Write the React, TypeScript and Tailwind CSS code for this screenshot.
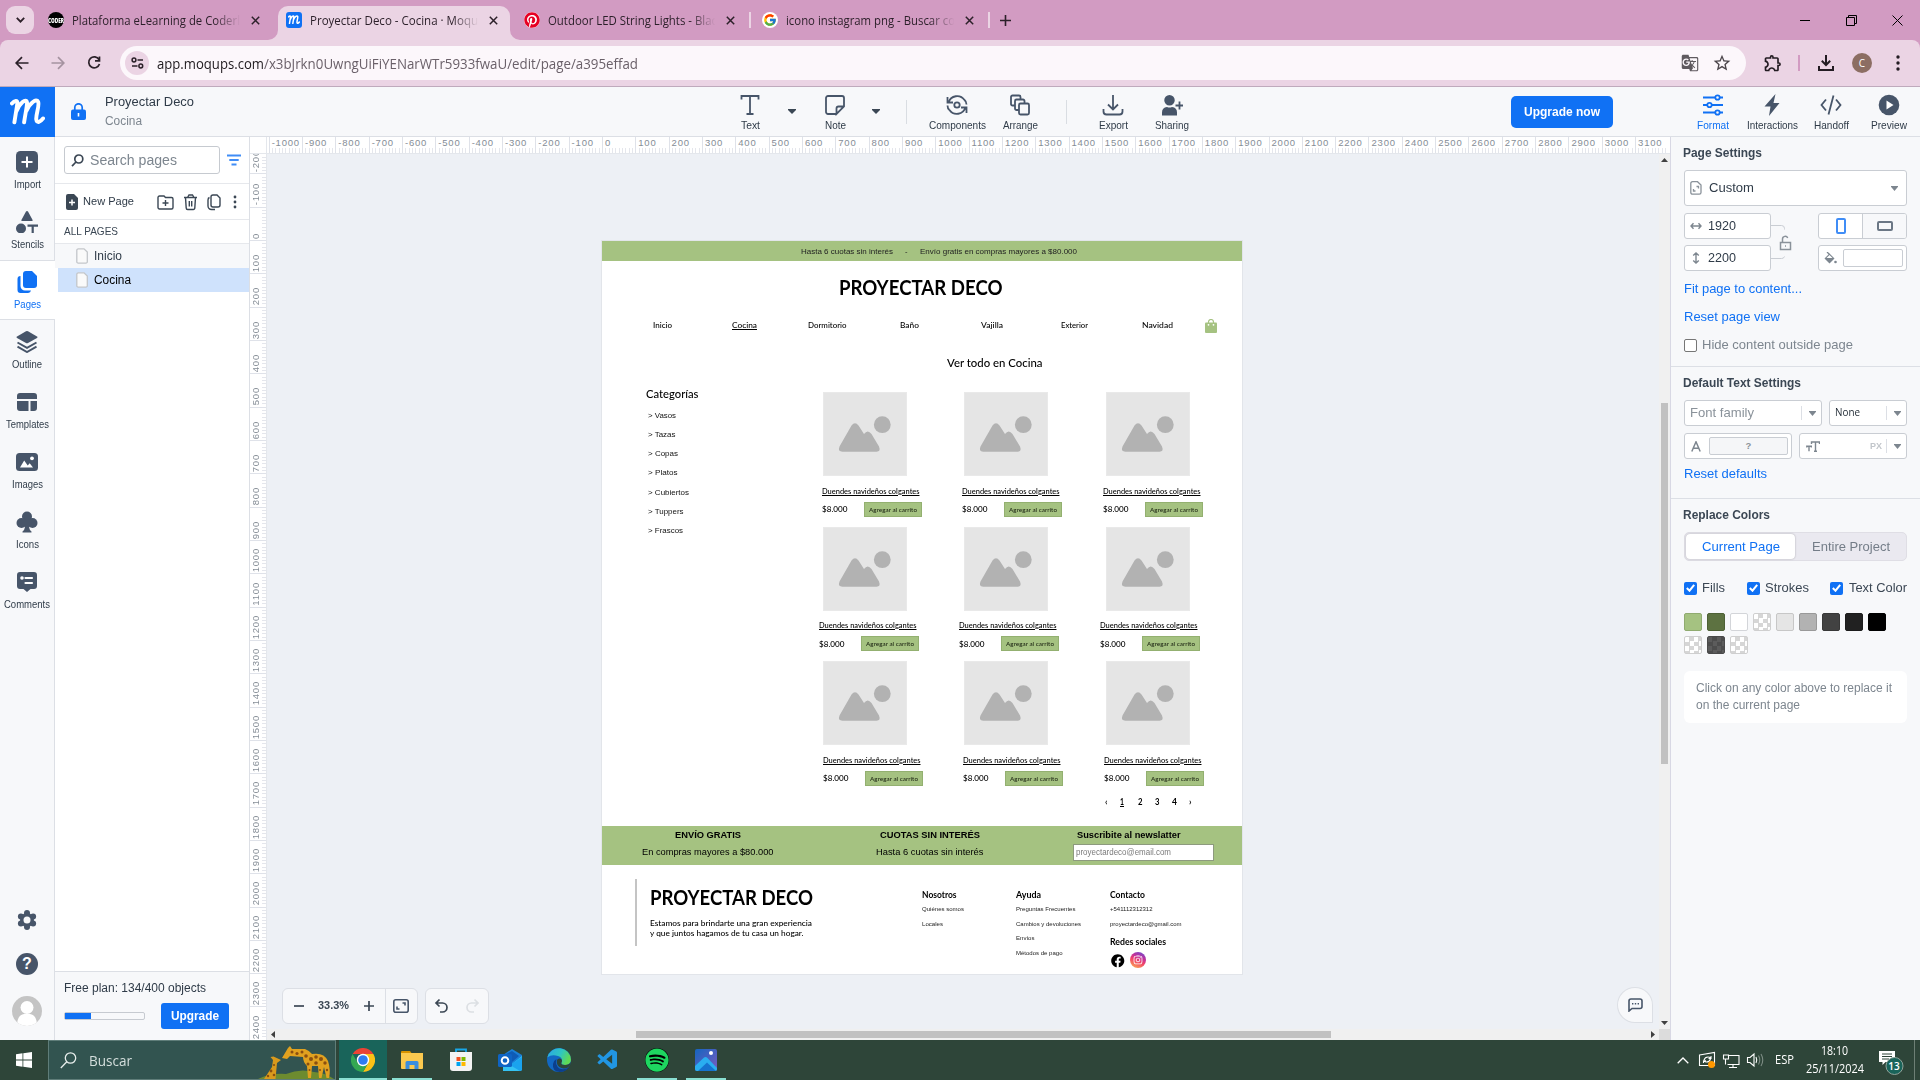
import React, { useLayoutEffect, useRef } from "react";
import { FcGoogle } from "react-icons/fc";
import { FaPinterest, FaSpotify, FaFacebook, FaInstagram } from "react-icons/fa";
import { MdGTranslate, MdStarBorder, MdOutlineExtension } from "react-icons/md";
import { VscVscode } from "react-icons/vsc";

/* Single line of text squeezed or stretched to an exact advance width. */
function Fit({ w, children, className = "" }: { w: number; children: React.ReactNode; className?: string }) {
  const ref = useRef<HTMLSpanElement>(null);
  useLayoutEffect(() => {
    const el = ref.current;
    if (!el) return;
    el.style.transform = "none";
    const natural = el.getBoundingClientRect().width;
    if (natural > 0) el.style.transform = `scaleX(${w / natural})`;
  }, [w, children]);
  return (
    <span className={`block shrink-0 whitespace-nowrap ${className}`} style={{ width: w }}>
      <span ref={ref} className="block w-max origin-left">{children}</span>
    </span>
  );
}

/* ---------- browser chrome ---------- */

const CloseX = () => (
  <svg width="9" height="9" viewBox="0 0 9 9" className="shrink-0" stroke="#2c2029" strokeWidth="1.5"><path d="M.8.8l7.4 7.4M8.2.8L.8 8.2" /></svg>
);

const MScript = ({ size, w = 3.4 }: { size: number; w?: number }) => (
  <svg width={size} height={size * 0.78} viewBox="0 0 36 28" fill="none" stroke="#fff" strokeWidth={w} strokeLinecap="round" strokeLinejoin="round">
    <path d="M2 5.5C4.500 2.500 8 1.800 7.600 5.500L4.500 25M6.500 14C10 5 16.500 0 17.500 4.500C17.800 7 16 15 14.500 25M17 13C20.500 5 27 0 29 4C30.500 8 26.500 17 27 22C27.500 26.500 31.500 24.500 34 21" />
  </svg>
);

function TabTitle({ w, text }: { w: number; text: string }) {
  return (
    <div className="w-[170px] pt-px text-[12.500px] leading-5 text-[#2b1f29] [mask-image:linear-gradient(to_right,#000_84%,transparent_99%)]">
      <Fit w={w}>{text}</Fit>
    </div>
  );
}

function TabStrip() {
  return (
    <div className="flex h-10 items-center bg-[#d29bc2] font-['Open_Sans','Noto_Sans',sans-serif]">
      <div className="ml-1.5 flex h-7 w-7 items-center justify-center rounded-[9px] bg-[#ebd4e4]">
        <svg width="9" height="6" viewBox="0 0 9 6" fill="none" stroke="#2c2029" strokeWidth="1.8"><path d="M.8.8l3.700 3.800L8.200.8" /></svg>
      </div>
      <div className="flex h-10 w-[230px] items-center pl-3.5">
        <div className="flex h-4 w-4 items-center justify-center rounded-full bg-black">
          <Fit w={16} className="text-[7px] font-extrabold leading-none text-white">CODER</Fit>
        </div>
        <div className="w-2" />
        <TabTitle w={168} text="Plataforma eLearning de Coderl" />
        <div className="w-[9px]" />
        <CloseX />
      </div>
      <div className="relative ml-3.5 flex h-[34px] w-[232px] self-end rounded-t-[10px] bg-[#ebd4e4] pl-2">
        <svg className="absolute -left-2.5 bottom-0" width="10" height="10" fill="#ebd4e4"><path d="M10 0v10H0A10 10 0 0 0 10 0" /></svg>
        <svg className="absolute -right-2.5 bottom-0" width="10" height="10" fill="#ebd4e4"><path d="M0 0v10h10A10 10 0 0 1 0 0" /></svg>
        <div className="flex items-center pb-1.5">
          <div className="flex h-4 w-4 items-center justify-center rounded-[3px] bg-[#1071f4]"><MScript size={12} w={4.5} /></div>
          <div className="w-2" />
          <TabTitle w={168} text="Proyectar Deco - Cocina · Moqu" />
          <div className="w-[9px]" />
          <CloseX />
        </div>
      </div>
      <div className="flex h-10 w-[241px] items-center pl-3.5">
        <div className="rounded-full bg-white"><FaPinterest size={16} color="#e60023" /></div>
        <div className="w-2" />
        <TabTitle w={169} text="Outdoor LED String Lights - Blac" />
        <div className="w-[9px]" />
        <CloseX />
        <div className="ml-3.5 h-4 w-0.5 bg-[#ebd4e4]" />
      </div>
      <div className="flex h-10 w-[239px] items-center pl-[11px]">
        <div className="flex h-4 w-4 items-center justify-center rounded-full bg-white"><FcGoogle size={14} /></div>
        <div className="w-2" />
        <TabTitle w={169} text="icono instagram png - Buscar co" />
        <div className="w-[9px]" />
        <CloseX />
        <div className="ml-3.5 h-4 w-0.5 bg-[#ebd4e4]" />
      </div>
      <svg width="11" height="11" viewBox="0 0 11 11" className="ml-[10px]" stroke="#2c2029" strokeWidth="1.6"><path d="M5.500 0v11M0 5.500h11" /></svg>
      <div className="flex-1" />
      <div className="flex w-[138px] items-center">
        <div className="flex w-[46px] justify-center"><div className="h-px w-[10px] bg-black" /></div>
        <div className="flex w-[46px] justify-center">
          <svg width="11" height="11" fill="none" stroke="#000"><path d="M.5 2.500h8v8h-8zM2.500 2.500v-2h8v8h-2" /></svg>
        </div>
        <div className="flex w-[46px] justify-center"><svg width="11" height="11" stroke="#000"><path d="M.5.5l10 10M10.500.5l-10 10" /></svg></div>
      </div>
    </div>
  );
}

function AddressBar() {
  return (
    <div className="bg-[#d29bc2]">
      <div className="flex h-[47px] items-center rounded-t-lg border-b border-[#bfaabc] bg-[#ebd4e4] font-['Open_Sans','Noto_Sans',sans-serif]">
        <svg width="120" height="20" viewBox="0 0 120 20" fill="none" strokeWidth="1.7">
          <path stroke="#2b2129" d="M28.500 10H16.500M22 4.200L16.200 10L22 15.800" />
          <path stroke="#a593a0" d="M51.500 10H63.500M58 4.200L63.800 10L58 15.800" />
          <path stroke="#2b2129" d="M99 6.500A5.500 5.500 0 1 0 99.500 11M99.500 3.500V7.800H95" />
        </svg>
        <div className="flex h-[34px] w-[1626px] items-center rounded-full bg-[#fcf7fb] pl-[5px]">
          <div className="flex h-6 w-6 items-center justify-center rounded-full bg-[#ebd4e4]">
            <svg width="13" height="12" fill="none" stroke="#2b2129" strokeWidth="1.500"><circle cx="3" cy="3" r="1.900" /><path d="M6.500 3H12M1 9h5.500" /><circle cx="9.800" cy="9" r="1.900" /></svg>
          </div>
          <div className="ml-2 flex pt-px text-[14px] leading-5">
            <Fit w={107} className="text-[#1f1a1e]">app.moqups.com</Fit>
            <Fit w={374} className="text-[#6a6069]">/x3bJrkn0UwngUiFiYENarWTr5933fwaU/edit/page/a395effad</Fit>
          </div>
          <div className="flex-1" />
          <MdGTranslate size={18} color="#5f5a5f" />
          <MdStarBorder size={20} color="#4c464b" className="ml-[13px] mr-[14px]" />
        </div>
        <div className="w-[17px]" />
        <MdOutlineExtension size={20} color="#231c22" />
        <div className="ml-[15px] h-4 w-0.5 bg-[#d29bc2]" />
        <svg width="18" height="18" viewBox="0 0 18 18" className="ml-[17px]" fill="none" stroke="#231c22" strokeWidth="2"><path d="M9 1v9.500M4.800 6.800L9 11l4.200-4.200M2 12v4h14v-4" /></svg>
        <div className="ml-[17px] flex h-5 w-5 items-center justify-center rounded-full bg-[#8c6e63] text-[10px] text-white">C</div>
        <svg width="4" height="16" className="ml-6" fill="#231c22"><circle cx="2" cy="2" r="1.700" /><circle cx="2" cy="8" r="1.700" /><circle cx="2" cy="14" r="1.700" /></svg>
      </div>
    </div>
  );
}

/* ---------- application header ---------- */

function Tool({ cell, w, label, active, children }: { cell: string; w: number; label: string; active?: boolean; children: React.ReactNode }) {
  return (
    <div className={`flex h-[49px] shrink-0 flex-col items-center pt-[7px] ${cell} ${active ? "text-[#1071f4]" : "text-[#475569]"}`}>
      <svg width="22" height="22" viewBox="0 0 22 22" fill="none" stroke="currentColor" strokeWidth="1.800">{children}</svg>
      <Fit w={w} className={`mt-[2px] text-[10.500px] leading-[14px] ${active ? "text-[#1071f4]" : "text-[#2f3b48]"}`}>{label}</Fit>
    </div>
  );
}

const Caret = ({ cell }: { cell: string }) => (
  <div className={`flex shrink-0 justify-center ${cell}`}><svg width="8" height="5" fill="#3b4754"><path d="M0 0h8v1L4 5L0 1z" /></svg></div>
);

function AppHeader() {
  return (
    <div className="flex h-[50px] items-center border-b border-[#dcdfe5] bg-[#f7f8fa]">
      <div className="-mb-px flex h-[50px] w-[55px] shrink-0 items-center justify-center bg-[#1071f4]"><MScript size={35} w={4} /></div>
      <svg width="15" height="17" viewBox="0 0 15 17" className="ml-4 shrink-0" fill="#1071f4"><rect y="6.500" width="15" height="10.500" rx="2" /><path d="M3.800 7V4.500a3.700 3.700 0 0 1 7.400 0V7" fill="none" stroke="#1071f4" strokeWidth="1.700" /><rect x="6.700" y="10" width="1.600" height="3.500" fill="#fff" /></svg>
      <div className="ml-[19px] flex w-[620px] flex-col pt-px">
        <Fit w={89} className="text-[12.500px] leading-[19px] text-[#2f3b48]">Proyectar Deco</Fit>
        <Fit w={37} className="text-[12px] leading-[19px] text-[#7d868f]">Cocina</Fit>
      </div>
      <Tool cell="w-[50px]" w={19} label="Text"><path d="M2.500 5.500V2H19.500V5.500M11 2V20M7.500 20h7" /></Tool>
      <Caret cell="w-[33px]" />
      <Tool cell="w-[54px]" w={21} label="Note"><path d="M12.500 20H4a2 2 0 0 1-2-2V4a2 2 0 0 1 2-2h14a2 2 0 0 1 2 2v8.500L12.500 20V14.500a2 2 0 0 1 2-2H20" /></Tool>
      <Caret cell="w-7" />
      <div className="flex w-8 justify-center"><div className="h-6 w-px bg-[#d9dde2]" /></div>
      <Tool cell="w-[70px]" w={57} label="Components"><path d="M2.500 8.500A9 9 0 0 1 18.500 6M1.500 3v5.500H7M19.500 13.500A9 9 0 0 1 3.500 16M20.500 19v-5.500H15M1.500 11.500q0 3 2 4.500M20.500 10.500q0-3-2-4.500" /><circle cx="11" cy="11" r="2.700" /></Tool>
      <Tool cell="w-14" w={35} label="Arrange"><rect x="10" y="9.500" width="10" height="11" rx="1.500" /><path d="M10 16H7.500A1.500 1.500 0 0 1 6 14.500V7A1.500 1.500 0 0 1 7.500 5.500H14A1.500 1.500 0 0 1 15.500 7v2.500M6 11.500H3.500A1.500 1.500 0 0 1 2 10V3A1.500 1.500 0 0 1 3.500 1.500H10A1.500 1.500 0 0 1 11.500 3v2.500" /></Tool>
      <div className="flex w-9 justify-center"><div className="h-6 w-px bg-[#d9dde2]" /></div>
      <Tool cell="w-[58px]" w={29} label="Export"><path d="M11 1v14M6 10.500l5 5l5-5M1.500 15v2.500a3 3 0 0 0 3 3h13a3 3 0 0 0 3-3V15" /></Tool>
      <Tool cell="w-[60px]" w={34} label="Sharing"><path fill="currentColor" stroke="none" d="M8.500 1a5 5 0 1 1 0 10.500a5 5 0 0 1 0-10.500M1 21.500v-3q0-5 5-5.500q2.500 1 5 0q5 .5 5 5.500v3z" /><path d="M18.500 7.500v8M14.500 11.500h8" /></Tool>
      <div className="w-[309px]" />
      <div className="flex h-8 w-[102px] shrink-0 items-center justify-center rounded-[5px] bg-[#1071f4] text-[13px] font-bold text-white"><Fit w={76}>Upgrade now</Fit></div>
      <div className="w-[71px]" />
      <Tool cell="w-[58px]" w={32} label="Format" active><path d="M1 3.500h12M18 3.500h3M1 11h4M10 11h11M1 18.500h12M18 18.500h3" /><circle cx="15.500" cy="3.500" r="2.200" /><circle cx="7.500" cy="11" r="2.200" /><circle cx="15.500" cy="18.500" r="2.200" /></Tool>
      <Tool cell="w-[60px]" w={51} label="Interactions"><path fill="currentColor" stroke="none" d="M14.500 0L3.500 12.500h6L8 22L18.500 9h-6z" /></Tool>
      <Tool cell="w-[58px]" w={35} label="Handoff"><path d="M6 5.500L1.500 11L6 16.500M16 5.500l4.500 5.500L16 16.500M13.500 1.500l-5 19" /></Tool>
      <Tool cell="w-[58px]" w={36} label="Preview"><circle cx="11" cy="11" r="10.300" fill="currentColor" stroke="none" /><path fill="#fff" stroke="none" d="M8.500 6.500v9l7-4.500z" /></Tool>
    </div>
  );
}

/* ---------- left rail ---------- */

const rail: { label: string; w: number; icon: React.ReactNode }[] = [
  { label: "Import", w: 27, icon: <><rect width="22" height="22" rx="4.500" /><path d="M11 5.500v11M5.500 11h11" stroke="#fff" strokeWidth="2" /></> },
  { label: "Stencils", w: 33, icon: <><path d="M11 0q.7 0 1 .6l4.600 8.400q.4 1-.6 1H6q-1 0-.6-1L10 .6q.3-.6 1-.6" /><circle cx="5" cy="17.500" r="5" /><path d="M11.500 13.500h10.500v2.200h-4.200V22.500h-2.200V15.700h-4.100z" /></> },
  { label: "Pages", w: 27, icon: <><path d="M10 0h6l5 5v9a3 3 0 0 1-3 3h-8a3 3 0 0 1-3-3V3a3 3 0 0 1 3-3" /><path d="M4.500 5v10a4.500 4.500 0 0 0 4.500 4.500h6a3 3 0 0 1-3 2.500H4.500a3 3 0 0 1-3-3V8a3 3 0 0 1 3-3" /></> },
  { label: "Outline", w: 30, icon: <><path d="M10 .3q1-.5 2 0l9 5.200q1 .7 0 1.400l-9 5.100q-1 .5-2 0l-9-5.100q-1-.7 0-1.400z" /><path d="M1.500 11.500l9.500 5.300l9.500-5.300M1.500 15.700l9.500 5.300l9.500-5.300" fill="none" stroke="currentColor" strokeWidth="2" /></> },
  { label: "Templates", w: 43, icon: <path d="M4 2h14a3 3 0 0 1 3 3v3H1V5a3 3 0 0 1 3-3M1 10h11.500v10H4a3 3 0 0 1-3-3zM14.500 10H21v7a3 3 0 0 1-3 3h-3.500z" /> },
  { label: "Images", w: 31, icon: <><rect y="2" width="22" height="18" rx="3.500" /><path d="M4 16.500l4.200-7l3.500 5l2-2.300l3.300 4.300z" fill="#fff" /><circle cx="16" cy="7.300" r="1.900" fill="#fff" /></> },
  { label: "Icons", w: 23, icon: <><circle cx="11" cy="5.500" r="5" /><circle cx="5.500" cy="12" r="5" /><circle cx="16.500" cy="12" r="5" /><path d="M9 9h4v5q0 5 2.500 6.500v1h-9v-1Q9 19 9 14z" /></> },
  { label: "Comments", w: 46, icon: <><path d="M4 1h14a3 3 0 0 1 3 3v11a3 3 0 0 1-3 3h-3.500L11 21l-3.500-3H4a3 3 0 0 1-3-3V4a3 3 0 0 1 3-3" /><circle cx="6" cy="7" r="1.800" fill="#fff" /><path d="M9.500 7h6.500M9.500 12h6.500" stroke="#fff" strokeWidth="2.200" strokeLinecap="round" /></> },
];

function Rail() {
  return (
    <div className="flex w-[55px] shrink-0 flex-col border-r border-[#dcdfe5] bg-[#f7f8fa] pt-[3px]">
      {rail.map((r) => {
        const on = r.label === "Pages";
        return (
          <div key={r.label} className={`flex h-[60px] shrink-0 flex-col items-center ${on ? "-mr-px border-y border-[#dcdfe5] bg-white pt-[10px] pr-px text-[#1071f4]" : "pt-[11px] text-[#475569]"}`}>
            <svg width="22" height="22" viewBox="0 0 22 22" fill="currentColor">{r.icon}</svg>
            <Fit w={r.w} className={`mt-[4px] text-[10.500px] leading-[14px] ${on ? "text-[#1071f4]" : "text-[#2f3b48]"}`}>{r.label}</Fit>
          </div>
        );
      })}
      <div className="flex-1" />
      <div className="flex flex-col items-center pb-[14px] text-[#475569]">
        <svg width="20" height="20" viewBox="0 0 20 20" fill="currentColor"><circle cx="10" cy="10" r="7" /><circle cx="10" cy="3" r="3" /><circle cx="10" cy="17" r="3" /><circle cx="3.900" cy="6.500" r="3" /><circle cx="16.100" cy="6.500" r="3" /><circle cx="3.900" cy="13.500" r="3" /><circle cx="16.100" cy="13.500" r="3" /><circle cx="10" cy="10" r="3.500" fill="#f7f8fa" /></svg>
        <div className="mt-[23px] flex h-[22px] w-[22px] items-center justify-center rounded-full bg-[#475569] text-[16px] font-bold text-white">?</div>
        <svg width="30" height="30" viewBox="0 0 30 30" className="mt-[21px]"><clipPath id="av"><circle cx="15" cy="15" r="15" /></clipPath><g clipPath="url(#av)"><rect width="30" height="30" fill="#c4c4c4" /><circle cx="15" cy="11.500" r="6.500" fill="#fff" /><path d="M5 30q0-11 7-12h6q7 1 7 12" fill="#fff" /></g></svg>
      </div>
    </div>
  );
}

/* ---------- pages panel ---------- */

const PageIcon = () => (
  <svg width="12" height="16" fill="#fafafa" stroke="#c3c6ca" strokeWidth="1.300"><path d="M3 .8h5L11.300 4v9.500a1.500 1.500 0 0 1-1.500 1.700H2.300a1.500 1.500 0 0 1-1.500-1.700V2.300A1.500 1.500 0 0 1 2.500.8z" /></svg>
);

function PagesPanel() {
  return (
    <div className="flex w-[195px] shrink-0 flex-col border-r border-[#dcdfe5] bg-white">
      <div className="flex h-[47px] items-center border-b border-[#e6e8ec] pl-[9px]">
        <div className="flex h-7 w-[156px] items-center rounded-[3px] border border-[#c6cad0] pl-1.5">
          <svg width="13" height="13" fill="none" stroke="#3b4754" strokeWidth="1.700"><circle cx="7.800" cy="5" r="4" /><path d="M5 8L1 12.200" /></svg>
          <Fit w={87} className="ml-1.5 text-[14px] text-[#7d868f]">Search pages</Fit>
        </div>
        <svg width="14" height="12" className="ml-[7px]" stroke="#1071f4" strokeOpacity=".8" strokeWidth="1.800"><path d="M0 1.500h14M2.300 6h9.400M4.500 10.500h5" /></svg>
      </div>
      <div className="flex h-9 items-center border-b border-[#e6e8ec] pl-[11px]">
        <svg width="12" height="16" fill="#3b4754"><path d="M2 0h6l4 4v10a2 2 0 0 1-2 2H2a2 2 0 0 1-2-2V2a2 2 0 0 1 2-2" /><path d="M6 5.500v6M3 8.500h6" stroke="#fff" strokeWidth="1.500" /></svg>
        <Fit w={51} className="ml-[5px] text-[11.500px] text-[#2f3b48]">New Page</Fit>
        <svg width="84" height="18" className="ml-[23px]" fill="none" stroke="#3b4754" strokeWidth="1.400">
          <path d="M2.500 3H7l1.500 1.500h6A1.500 1.500 0 0 1 16 6v8.500a1.500 1.500 0 0 1-1.500 1.500h-12A1.500 1.500 0 0 1 1 14.500v-10A1.500 1.500 0 0 1 2.500 3M8.500 7v6M5.500 10h6" />
          <path d="M27 4.500h13M30.500 4.500L32 2h3.500L37 4.500M28.500 4.500l.7 10.500a1.500 1.500 0 0 0 1.500 1.500h5.600a1.500 1.500 0 0 0 1.500-1.500l.7-10.500M32.300 8v5.500M34.700 8v5.500" />
          <path d="M56 2h4l3 3v7a2 2 0 0 1-2 2h-5a2 2 0 0 1-2-2V4a2 2 0 0 1 2-2M52.500 4.500Q51 5 51 7v6a3.500 3.500 0 0 0 3.500 3.500h3.500" />
          <g fill="#3b4754" stroke="none"><circle cx="78" cy="4" r="1.400" /><circle cx="78" cy="9" r="1.400" /><circle cx="78" cy="14" r="1.400" /></g>
        </svg>
      </div>
      <div className="flex h-6 items-center border-b border-[#e6e8ec] pl-[9px] text-[10.500px] text-[#3b4754]"><Fit w={54}>ALL PAGES</Fit></div>
      <div className="flex h-6 items-center gap-1.5 bg-[#f7f8fa] pl-[21px] text-[12.500px] text-[#2f3b48]"><PageIcon /><Fit w={28}>Inicio</Fit></div>
      <div className="ml-[3px] flex h-6 items-center gap-1.5 bg-[#cfe2fc] pl-[18px] text-[12.500px] text-black"><PageIcon /><Fit w={37}>Cocina</Fit></div>
      <div className="flex-1" />
      <div className="h-[69px] border-t border-[#dcdfe5] bg-[#f7f8fa] pl-[9px] pt-2">
        <Fit w={142} className="text-[12px] leading-4 text-[#2f3b48]">Free plan: 134/400 objects</Fit>
        <div className="mt-[7px] flex items-center">
          <div className="h-2 w-[81px] rounded-[2px] border border-[#c6cad0] bg-[#f7f8fa]"><div className="h-full w-[26px] bg-[#1071f4]" /></div>
          <div className="ml-4 flex h-[26px] w-[68px] items-center justify-center rounded-[3px] bg-[#1071f4] text-[12px] font-bold text-white"><Fit w={48}>Upgrade</Fit></div>
        </div>
      </div>
    </div>
  );
}

/* ---------- rulers ---------- */

const H_MARKS = Array.from({ length: 42 }, (_, i) => -1000 + i * 100);
const V_MARKS = Array.from({ length: 28 }, (_, i) => -300 + i * 100);
const TEN = Array.from({ length: 10 }, (_, i) => i);

function TopRuler() {
  return (
    <div className="flex h-[17px] overflow-hidden border-b border-[#e4e7ec] bg-white pl-[1.670px]">
      {H_MARKS.map((m) => (
        <div key={m} className="relative flex h-4 w-[33.333px] shrink-0 items-end">
          {TEN.map((t) => <div key={t} className={`w-[3.3333px] border-l ${t ? "h-[5px] border-[#e4e6ec]" : "h-4 border-[#dfe2e9]"}`} />)}
          <span className="absolute -top-px left-[3px] text-[9.500px] leading-[13px] tracking-[.8px] text-[#858d96]">{m}</span>
        </div>
      ))}
    </div>
  );
}

function SideRuler() {
  return (
    <div className="w-[17px] shrink-0 overflow-hidden border-r border-[#e4e7ec] bg-white">
      <div className="h-[17px] border-b border-[#e4e7ec]" />
      <div className="h-[886px] overflow-hidden">
        <div className="-mt-[46.333px] flex flex-col">
          {V_MARKS.map((m) => (
            <div key={m} className="relative flex h-[33.333px] w-4 shrink-0 flex-col items-end">
              {TEN.map((t) => <div key={t} className={`h-[3.3333px] shrink-0 border-b ${t < 9 ? "w-[4px] border-[#e4e6ec]" : "w-4 border-[#dfe2e9]"}`} />)}
              <span className="absolute bottom-[2px] left-0 rotate-180 text-[9.500px] leading-[12px] tracking-[.8px] text-[#858d96] [writing-mode:vertical-rl]">{m}</span>
            </div>
          ))}
        </div>
      </div>
    </div>
  );
}

/* ---------- artboard ---------- */

const OX = 602;
const OY = 241;

type Node = { x: number; y: number; w: number; t: string; c: string };
const ALATA = "font-['Lato',sans-serif] text-black";
const ARIAL = "text-[#111]";

function Label({ x, y, w, t, c }: Node) {
  return (
    <div className="absolute flex h-6 items-center" style={{ left: x - OX, top: y - OY - 12 }}>
      <Fit w={w} className={`leading-none ${c}`}>{t}</Fit>
    </div>
  );
}

const nav = `${ALATA} text-[8.300px] font-medium`;
const cat = `${ARIAL} text-[8px]`;
const tiny = "text-[#222] text-[6px]";
const head = `${ALATA} text-[9px] font-bold`;

const labels: Node[] = [
  { x: 800.5, y: 251.5, w: 92, t: "Hasta 6 cuotas sin interés", c: "text-[#222] text-[8px]" },
  { x: 904.5, y: 251.5, w: 2.5, t: "-", c: "text-[#222] text-[8px]" },
  { x: 919.5, y: 251.5, w: 157, t: "Envío gratis en compras mayores a $80.000", c: "text-[#222] text-[8px]" },
  { x: 839, y: 288, w: 163.5, t: "PROYECTAR DECO", c: `${ALATA} text-[21.500px] font-bold` },
  { x: 652.5, y: 325.5, w: 19, t: "Inicio", c: nav },
  { x: 732, y: 325.5, w: 25, t: "Cocina", c: `${nav} underline` },
  { x: 808, y: 325.5, w: 38.5, t: "Dormitorio", c: nav },
  { x: 900, y: 325.5, w: 19, t: "Baño", c: nav },
  { x: 981, y: 325.5, w: 22, t: "Vajilla", c: nav },
  { x: 1061, y: 325.5, w: 27, t: "Exterior", c: nav },
  { x: 1141.5, y: 325.5, w: 31, t: "Navidad", c: nav },
  { x: 946.5, y: 363, w: 95.5, t: "Ver todo en Cocina", c: `${ALATA} text-[12px] font-medium` },
  { x: 646, y: 394, w: 52.5, t: "Categorías", c: `${ALATA} text-[12px] font-medium` },
  { x: 648, y: 416, w: 28, t: "> Vasos", c: cat },
  { x: 648, y: 435, w: 27.5, t: "> Tazas", c: cat },
  { x: 648, y: 454, w: 30, t: "> Copas", c: cat },
  { x: 648, y: 473, w: 29.5, t: "> Platos", c: cat },
  { x: 648, y: 493, w: 41, t: "> Cubiertos", c: cat },
  { x: 648, y: 512, w: 35.5, t: "> Tuppers", c: cat },
  { x: 648, y: 531, w: 35, t: "> Frascos", c: cat },
  { x: 1105, y: 801.5, w: 2.5, t: "‹", c: head },
  { x: 1120, y: 801.5, w: 4, t: "1", c: `${head} underline` },
  { x: 1138, y: 801.5, w: 4.5, t: "2", c: head },
  { x: 1155, y: 801.5, w: 4.5, t: "3", c: head },
  { x: 1171.5, y: 801.5, w: 5, t: "4", c: head },
  { x: 1189, y: 801.5, w: 2.5, t: "›", c: head },
  { x: 674.5, y: 835.5, w: 66, t: "ENVÍO GRATIS", c: "text-black text-[9px] font-bold" },
  { x: 642, y: 852, w: 131.5, t: "En compras mayores a $80.000", c: "text-black text-[9px]" },
  { x: 880, y: 835.5, w: 100, t: "CUOTAS SIN INTERÉS", c: "text-black text-[9px] font-bold" },
  { x: 876, y: 852, w: 107.5, t: "Hasta 6 cuotas sin interés", c: "text-black text-[9px]" },
  { x: 1076.5, y: 835.5, w: 103.5, t: "Suscribite al newslatter", c: "text-black text-[9px] font-bold" },
  { x: 649.5, y: 898, w: 163, t: "PROYECTAR DECO", c: `${ALATA} text-[21.500px] font-bold` },
  { x: 650, y: 923.5, w: 162, t: "Estamos para brindarte una gran experiencia", c: nav },
  { x: 650, y: 933.5, w: 153.5, t: "y que juntos hagamos de tu casa un hogar.", c: nav },
  { x: 921.5, y: 894.5, w: 34.5, t: "Nosotros", c: head },
  { x: 921.5, y: 909, w: 42, t: "Quiénes somos", c: tiny },
  { x: 921.5, y: 924, w: 21, t: "Locales", c: tiny },
  { x: 1015.5, y: 894.5, w: 25, t: "Ayuda", c: head },
  { x: 1015.5, y: 909, w: 59.5, t: "Preguntas Frecuentes", c: tiny },
  { x: 1015.5, y: 924, w: 65, t: "Cambios y devoluciones", c: tiny },
  { x: 1015.5, y: 938, w: 18.5, t: "Envíos", c: tiny },
  { x: 1015.5, y: 953, w: 46.5, t: "Métodos de pago", c: tiny },
  { x: 1109.5, y: 894.5, w: 35, t: "Contacto", c: head },
  { x: 1109.5, y: 909, w: 42.5, t: "+541112312312", c: tiny },
  { x: 1109.5, y: 924, w: 71.5, t: "proyectardeco@gmail.com", c: tiny },
  { x: 1109.5, y: 941, w: 56, t: "Redes sociales", c: head },
];

const rows = [
  { img: 392, dx: 0, title: 491, price: 509.5, btn: 502 },
  { img: 527, dx: -2.7, title: 625, price: 644.5, btn: 636 },
  { img: 661, dx: 1.3, title: 760, price: 778.5, btn: 771 },
];
const cols = [{ img: 823, x: 821.7 }, { img: 964, x: 961.7 }, { img: 1105.5, x: 1102.7 }];

function Product({ row, col }: { row: (typeof rows)[number]; col: (typeof cols)[number] }) {
  const x = col.x + row.dx;
  return (
    <>
      <svg className="absolute" style={{ left: col.img - OX, top: row.img - OY }} width="84" height="84" viewBox="0 0 84 84">
        <rect x=".5" y=".5" width="83" height="83" fill="#e5e5e5" stroke="#e9e9e9" />
        <path fill="#b2b2b2" d="M28.500 33.500Q32 29 35.500 33.500L41 42Q44.700 37 48.500 42L56 54.500Q58 59.700 53.500 59.700H19.500Q14.500 59.700 16.500 54.500z" />
        <circle cx="59.300" cy="32.700" r="8.400" fill="#b2b2b2" />
      </svg>
      <Label x={x} y={row.title} w={97.5} t="Duendes navideños colgantes" c={`${nav} underline`} />
      <Label x={x + 0.3} y={row.price} w={25.5} t="$8.000" c={nav} />
      <div className="absolute flex h-[15px] w-[58px] items-center justify-center border border-[#93b070] bg-[#a5c281] font-['Lato',sans-serif] text-[6.300px] font-medium text-[#1c2413]" style={{ left: x + 42 - OX, top: row.btn - OY }}>
        <Fit w={48}>Agregar al carrito</Fit>
      </div>
    </>
  );
}

function Artboard() {
  return (
    <div className="relative h-[733px] w-[640px] bg-white outline outline-[#e2e5ea]">
      <div className="h-5 bg-[#a5c281]" />
      <div className="mt-[565px] h-[39px] bg-[#a5c281]" />
      <div className="ml-[33px] mt-[14px] h-[67px] w-[2px] bg-[#c4c4c4]" />
      {rows.map((r) => cols.map((c) => <Product key={`${r.img}-${c.img}`} row={r} col={c} />))}
      {labels.map((l, i) => <Label key={i} {...l} />)}
      <svg className="absolute left-[603px] top-[78px]" width="12" height="14" fill="#a5c281"><path d="M1 3.500h10q1 0 1 1V13q0 1-1 1H1q-1 0-1-1V4.500q0-1 1-1" /><path d="M3.500 5V3a2.500 2.500 0 0 1 5 0v2" fill="none" stroke="#a5c281" strokeWidth="1.200" /><circle cx="3.500" cy="5.800" r=".9" fill="#fff" /><circle cx="8.500" cy="5.800" r=".9" fill="#fff" /></svg>
      <div className="absolute left-[470.500px] top-[603px] flex h-[17px] w-[141px] items-center border border-[#8d9a7e] bg-white pl-[2px] text-[8.500px] text-[#7a7a7a]"><Fit w={95}>proyectardeco@email.com</Fit></div>
      <FaFacebook size={13.5} color="#000" className="absolute left-[509px] top-[713px]" />
      <div className="absolute left-[528px] top-[711px] flex h-4 w-4 items-center justify-center rounded-full bg-[linear-gradient(25deg,#fdb94e,#f0426b_45%,#c2309b_65%,#5b51d8)]"><FaInstagram size={10} color="#fff" /></div>
    </div>
  );
}

/* ---------- canvas area ---------- */

function Canvas() {
  return (
    <div className="flex min-w-0 flex-1">
      <SideRuler />
      <div className="flex min-w-0 flex-1 flex-col">
        <TopRuler />
        <div className="flex h-[875px]">
          <div className="relative flex-1 bg-[#edf0f5] pl-[335px] pt-[87px]">
            <Artboard />
            <div className="absolute left-[15px] top-[834px] flex h-9 items-center gap-[7px]">
              <div className="flex h-9 w-[136px] items-center rounded-md border border-[#dcdfe5] bg-[#f7f8fa]">
                <svg width="10" height="10" className="ml-[11px]" stroke="#3b4754" strokeWidth="1.700"><path d="M0 5h10" /></svg>
                <Fit w={31} className="ml-[14px] text-[11.500px] font-bold text-[#3b4754]">33.3%</Fit>
                <svg width="10" height="10" className="ml-[15px]" stroke="#3b4754" strokeWidth="1.700"><path d="M0 5h10M5 0v10" /></svg>
                <div className="ml-[11px] h-[34px] w-px bg-[#dcdfe5]" />
                <svg width="16" height="14" className="ml-[7px]" fill="none" stroke="#475569" strokeWidth="1.600"><rect x=".8" y=".8" width="14.400" height="12.400" rx="2" /><path d="M9.500 4h2.500v2.500M6.500 10H4V7.500" /></svg>
              </div>
              <div className="flex h-9 w-16 items-center rounded-md border border-[#dcdfe5] bg-[#f7f8fa]">
                <svg width="62" height="16" fill="none" strokeWidth="1.700"><path stroke="#3b4754" d="M13.500 1.500L10 5l3.500 3.500M10 5h6.500a4.500 4.500 0 0 1 0 9H14" /><path stroke="#dcdfe3" d="M48.500 1.500L52 5l-3.500 3.500M52 5h-6.500a4.500 4.500 0 0 0 0 9H48" /></svg>
              </div>
            </div>
            <div className="absolute left-[1350px] top-[833px] flex h-9 w-9 items-center justify-center rounded-full rounded-br-[3px] border border-[#dcdfe5] bg-[#f7f8fa]">
              <svg width="15" height="14" fill="none" stroke="#475569" strokeWidth="1.600"><path d="M3 1h9a2 2 0 0 1 2 2v5.500a2 2 0 0 1-2 2H4L1 13V3a2 2 0 0 1 2-2" /><path d="M4 5.800h7" strokeDasharray="1.400 1.400" /></svg>
            </div>
          </div>
          <div className="flex w-[11px] flex-col items-center bg-[#f0f0f0] py-1">
            <svg width="7" height="4" fill="#404040"><path d="M0 4L3.500 0L7 4z" /></svg>
            <div className="mt-[241px] h-[361px] w-[7px] bg-[#c1c1c1]" />
            <div className="flex-1" />
            <svg width="7" height="4" fill="#404040"><path d="M0 0L3.500 4L7 0z" /></svg>
          </div>
        </div>
        <div className="flex h-[11px] items-center bg-[#f0f0f0] pl-1">
          <svg width="4" height="7" fill="#404040"><path d="M4 0L0 3.500L4 7z" /></svg>
          <div className="ml-[361px] h-[7px] w-[695px] bg-[#c1c1c1]" />
          <div className="flex-1" />
          <svg width="4" height="7" fill="#404040"><path d="M0 0L4 3.500L0 7z" /></svg>
          <div className="ml-1 h-[11px] w-[11px] bg-[#dcdcdc]" />
        </div>
      </div>
    </div>
  );
}

/* ---------- settings panel ---------- */

const box = "flex items-center rounded-[3px] border border-[#c9cdd3] bg-white";
const Down = () => <svg width="7" height="5" className="shrink-0" fill="#7d868f"><path d="M0 0h7v.8L3.500 5L0 .8z" /></svg>;
const Check = () => (
  <div className="flex h-[13px] w-[13px] shrink-0 items-center justify-center rounded-[2px] bg-[#1071f4]"><svg width="9" height="8" fill="none" stroke="#fff" strokeWidth="2"><path d="M.8 4l2.700 2.700L8.200.8" /></svg></div>
);

const CHECKER = "bg-[repeating-conic-gradient(#d6d6d6_0_25%,#fff_0_50%)] bg-[length:9px_9px] border-[#cfcfcf]";
const swatches = [
  ["bg-[#a5c281] border-[#90ab70]", "bg-[#5d7241] border-[#4e6136]", "bg-white border-[#d3d5d9]", CHECKER, "bg-[#e5e5e5] border-[#c7c7c7]", "bg-[#b2b2b2] border-[#999]", "bg-[#424242] border-[#383838]", "bg-[#212121] border-[#1c1c1c]", "bg-black border-black"],
  [CHECKER, "bg-[repeating-conic-gradient(#4d4d4d_0_25%,#5c5c5c_0_50%)] bg-[length:9px_9px] border-[#4a4a4a]", CHECKER],
];

function Settings() {
  const title = "text-[12.500px] font-bold leading-4 text-[#3b4754]";
  const link = "text-[13px] leading-5 text-[#1071f4]";
  return (
    <div className="w-[250px] shrink-0 border-l border-[#d8d8e4] bg-[#f7f8fa]">
      <div className="h-[230px] border-b border-[#dcdfe5] pl-[13px] pt-2">
        <Fit w={79} className={`${title} -ml-px`}>Page Settings</Fit>
        <div className={`${box} mt-[9px] h-9 w-[223px] pl-[5px] pr-2`}>
          <svg width="12" height="14" fill="none" stroke="#8a929a" strokeWidth="1.300"><path d="M2.500.7h5L11 4v7.500a1.700 1.700 0 0 1-1.700 1.700H2.500A1.700 1.700 0 0 1 .8 11.500v-9A1.700 1.700 0 0 1 2.500.7M6.500 5.500h2V7.500M5.500 10h-2V8" /></svg>
          <Fit w={45} className="ml-[7px] text-[13px] text-[#2f3b48]">Custom</Fit>
          <div className="flex-1" />
          <Down />
        </div>
        <div className="mt-[7px] flex">
          <div>
            <div className={`${box} h-[26px] w-[87px] pl-[5px]`}>
              <svg width="12" height="8" fill="none" stroke="#7d868f" strokeWidth="1.400"><path d="M1 4h10M3.500 1.200L1 4l2.500 2.800M8.500 1.200L11 4L8.500 6.800" /></svg>
              <Fit w={28} className="ml-1.5 text-[13px] text-[#2f3b48]">1920</Fit>
            </div>
            <div className={`${box} mt-1.5 h-[26px] w-[87px] pl-[5px]`}>
              <svg width="12" height="12" fill="none" stroke="#7d868f" strokeWidth="1.400"><path d="M6 1v10M3.200 3.500L6 1l2.800 2.500M3.200 8.500L6 11l2.800-2.500" /></svg>
              <Fit w={28} className="ml-1.5 text-[13px] text-[#2f3b48]">2200</Fit>
            </div>
          </div>
          <svg width="22" height="58" fill="none" stroke="#c9cdd3"><path d="M0 12.500h10.500a3 3 0 0 1 3 3v1M0 45.500h10.500a3 3 0 0 0 3-2" /><path stroke="#8a929a" strokeWidth="1.500" d="M9.500 29.500h10v7h-10zM11.500 29.500v-3.500a2.700 2.700 0 0 1 5.200-1M14 33h1" /></svg>
          <div className="ml-[25px]">
            <div className={`${box} h-[26px] w-[89px] overflow-hidden`}>
              <div className="flex h-full w-[44px] items-center justify-center border-r border-[#c9cdd3]"><div className="h-4 w-[10px] rounded-[2px] border-2 border-[#1071f4]/80" /></div>
              <div className="flex h-full flex-1 items-center justify-center bg-[#f7f8fa]"><div className="h-[10px] w-4 rounded-[2px] border-2 border-[#6b7785]" /></div>
            </div>
            <div className={`${box} mt-1.5 h-[26px] w-[89px] pl-[5px]`}>
              <svg width="13" height="12" fill="#7d868f"><path d="M.5 6.500L5.500 1.500L10.500 6.500L5.500 11.500z" /><path d="M3 0l2.500 2.500" stroke="#7d868f" strokeWidth="1.300" /><path d="M2.500 6L5.500 3L8.500 6z" fill="#fff" /><circle cx="11.500" cy="10" r="1.300" /></svg>
              <div className="ml-1.5 h-[18px] w-[60px] rounded-[2px] border border-[#c9cdd3]" />
            </div>
          </div>
        </div>
        <Fit w={118} className={`mt-[8px] ${link}`}>Fit page to content...</Fit>
        <Fit w={96} className={`mt-2 ${link}`}>Reset page view</Fit>
        <div className="mt-2 flex h-5 items-center"><div className="h-[13px] w-[13px] rounded-[2px] border border-[#767676] bg-white" /><Fit w={151} className="ml-[5px] text-[13px] text-[#7d868f]">Hide content outside page</Fit></div>
      </div>
      <div className="h-[132px] border-b border-[#dcdfe5] pl-[13px] pt-2">
        <Fit w={118} className={`${title} -ml-px`}>Default Text Settings</Fit>
        <div className="mt-[9px] flex gap-[7px]">
          <div className={`${box} h-[26px] w-[138px] pl-[5px]`}><Fit w={64} className="text-[13px] text-[#8a929a]">Font family</Fit><div className="ml-[47px] h-[14px] w-px bg-[#dcdfe5]" /><div className="ml-[7px]"><Down /></div></div>
          <div className={`${box} h-[26px] w-[78px] pl-[5px]`}><Fit w={25} className="font-['Open_Sans',sans-serif] text-[10.500px] text-[#1f2933]">None</Fit><div className="ml-[26px] h-[14px] w-px bg-[#dcdfe5]" /><div className="ml-[7px]"><Down /></div></div>
        </div>
        <div className="mt-[7px] flex gap-[7px]">
          <div className={`${box} h-[26px] w-[108px] pl-1.5`}>
            <svg width="10" height="11" fill="none" stroke="#7d868f" strokeWidth="1.500"><path d="M.8 10.500L5 .8L9.200 10.500M2.300 7.300h5.400" /></svg>
            <div className="ml-2 flex h-[18px] w-[79px] items-center justify-center rounded-[2px] border border-[#c9cdd3] bg-[#f5f6f8] text-[9.500px] font-bold text-[#8a929a]">?</div>
          </div>
          <div className={`${box} h-[26px] w-[108px] pl-1.5`}>
            <svg width="14" height="11" fill="none" stroke="#7d868f" strokeWidth="1.400"><path d="M5.500 3V1h8v2M9.500 1v9.300M8 10.300h3M.8 6.500V5.200h4.500v1.300M3 5.200v5" /></svg>
            <Fit w={12} className="ml-[50px] text-[8.500px] font-bold text-[#c2c6cb]">PX</Fit><div className="ml-[4px] h-[14px] w-px bg-[#dcdfe5]" /><div className="ml-[7px]"><Down /></div>
          </div>
        </div>
        <Fit w={83} className={`mt-[5px] ${link}`}>Reset defaults</Fit>
      </div>
      <div className="pl-[13px] pt-2">
        <Fit w={87} className={`${title} -ml-px`}>Replace Colors</Fit>
        <div className="mt-[9px] flex h-[29px] w-[223px] items-center rounded-[5px] border border-[#dfdee5] bg-[#eae9f0] p-px text-[13px]">
          <div className="flex h-[25px] w-[109px] items-center justify-center rounded-[4px] bg-white text-[#1071f4] shadow-[0_0_2px_rgba(0,0,0,.3)]"><Fit w={78}>Current Page</Fit></div>
          <Fit w={78} className="ml-[17px] text-[#747d88]">Entire Project</Fit>
        </div>
        <div className="mt-[17px] flex h-5 items-center text-[13px] text-[#3b4754]">
          <Check /><Fit w={23} className="ml-[5px] mr-[22px]">Fills</Fit>
          <Check /><Fit w={44} className="ml-[5px] mr-[21px]">Strokes</Fit>
          <Check /><Fit w={58} className="ml-[6px]">Text Color</Fit>
        </div>
        <div className="mt-[15px] flex flex-col gap-[5px]">
          {swatches.map((r, i) => <div key={i} className="flex gap-[5px]">{r.map((s, j) => <div key={j} className={`h-[18px] w-[18px] rounded-[2px] border ${s}`} />)}</div>)}
        </div>
        <div className="mt-[17px] flex h-[52px] w-[223px] flex-col justify-center rounded-md bg-white pl-3 text-[12px] leading-[17px] text-[#7d868f]">
          <Fit w={196}>Click on any color above to replace it</Fit>
          <Fit w={104}>on the current page</Fit>
        </div>
      </div>
    </div>
  );
}

/* ---------- taskbar ---------- */

const Giraffes = () => (
  <svg width="76" height="33" viewBox="0 0 76 33">
    <path d="M0 33Q12 27 28 28Q42 22 56 26Q68 27 76 33z" fill="#6d8b2f" />
    <path d="M6 33L14 21L15 14L12.500 11L15.500 10.500L23 14L19 17L17.500 33z" fill="#d99a1c" />
    <path d="M24 12L30 2L32 0L34 3L47 3Q52 5 54 8Q66 6 70 15Q73 24 71 32H68.500L66 21L63.500 32H61L60 20H54L53 32H50L49 20Q45 16 45 11L32 10L29 13z" fill="#e0a11f" />
    <g fill="#8a4f10"><circle cx="34" cy="6" r="1.500" /><circle cx="39" cy="7.500" r="1.600" /><circle cx="44" cy="6" r="1.500" /><circle cx="48" cy="10" r="1.800" /><circle cx="53" cy="13" r="2" /><circle cx="58" cy="11" r="1.800" /><circle cx="58" cy="17" r="1.800" /><circle cx="63" cy="13" r="2" /><circle cx="67" cy="17" r="1.700" /><circle cx="50" cy="18" r="1.500" /><circle cx="51.500" cy="24" r="1" /><circle cx="69" cy="24" r="1.200" /><circle cx="62" cy="24" r="1" /><circle cx="16" cy="19" r="1.100" /><circle cx="13" cy="25" r="1.400" /><circle cx="16" cy="29" r="1.300" /><circle cx="10" cy="30" r="1.200" /></g>
  </svg>
);

function TaskButton({ children, on, active }: { children: React.ReactNode; on?: boolean; active?: boolean }) {
  return (
    <div className={`flex h-10 shrink-0 flex-col items-center pt-[7px] ${active ? "w-12 bg-[#19645a]" : "w-[49px]"}`}>
      <div className="flex h-[26px] items-center">{children}</div>
      <div className="flex-1" />
      {on && <div className={`h-0.5 bg-[#8adfd2] ${active ? "w-full" : "w-10"}`} />}
    </div>
  );
}

function Taskbar() {
  return (
    <div className="flex h-10 items-center bg-[#2e4539] font-['Open_Sans','Noto_Sans',sans-serif] text-white">
      <svg width="16" height="16" viewBox="0 0 16 16" className="ml-4" fill="#fff"><path d="M0 2.200L6.500 1.300V7.600H0zM7.300 1.200L16 0v7.600H7.300zM0 8.400h6.500v6.300L0 13.800zM7.300 8.400H16V16l-8.700-1.200z" /></svg>
      <div className="ml-4 flex h-10 w-72 items-center border border-[#5f7d79] bg-[#325450]">
        <svg width="17" height="17" className="ml-[11px]" fill="none" stroke="#e8eeec" strokeWidth="1.300"><circle cx="10.500" cy="6" r="5.200" /><path d="M6.800 9.800L.8 16" /></svg>
        <Fit w={43} className="ml-3 text-[14px] text-[#d5dfdd]">Buscar</Fit>
        <div className="flex-1" />
        <div className="mr-px self-end"><Giraffes /></div>
      </div>
      <div className="ml-[3px] flex">
        <TaskButton on active>
          <svg width="24" height="24" viewBox="0 0 24 24"><path d="M1.600 6A12 12 0 0 1 22.400 6H12z" fill="#ea4335" /><path d="M22.400 6A12 12 0 0 1 12 24L17.200 15L12 6z" fill="#fbc116" /><path d="M1.600 6A12 12 0 0 0 12 24L17.200 15H6.800z" fill="#34a853" /><circle cx="12" cy="12" r="6.200" fill="#fff" /><circle cx="12" cy="12" r="4.800" fill="#2f7cf0" /></svg>
        </TaskButton>
        <TaskButton on>
          <svg width="22" height="20" viewBox="0 0 22 20"><path d="M0 2q0-1 1-1h8l1.500 2H0z" fill="#d99300" /><path d="M0 3h22v15q0 1-1 1H1q-1 0-1-1z" fill="#fbc94f" /><path d="M4.500 19v-6.500q0-1.500 1.500-1.500h10q1.500 0 1.500 1.500V19h-4v-4h-5v4z" fill="#3b8ede" /></svg>
        </TaskButton>
        <TaskButton>
          <svg width="24" height="24" viewBox="0 0 24 24"><path d="M7 5V1.500h10V5" fill="none" stroke="#19a8e8" strokeWidth="1.800" /><path d="M1 4h22v16q0 3-3 3H4q-3 0-3-3z" fill="#f3f3f3" /><path fill="#f25022" d="M7.500 9h4v4h-4z" /><path fill="#7fba00" d="M12.500 9h4v4h-4z" /><path fill="#00a4ef" d="M7.500 14h4v4h-4z" /><path fill="#ffb900" d="M12.500 14h4v4h-4z" /></svg>
        </TaskButton>
        <TaskButton>
          <svg width="24" height="24" viewBox="0 0 24 24"><path d="M5 7L14 1l10 6v12H5z" fill="#1a7fd6" /><path d="M8 6l6-3l7 5l-7 6z" fill="#0f5bb5" /><path d="M5 23V13l9 3l10-8v13q0 2-2 2z" fill="#35c3f3" /><path d="M24 9L12 17l10 6q2 0 2-2z" fill="#1aa3ee" /><rect y="6" width="14" height="13" rx="1.500" fill="#0f64c4" /><circle cx="7" cy="12.500" r="3.300" fill="none" stroke="#fff" strokeWidth="2" /></svg>
        </TaskButton>
        <TaskButton>
          <svg width="24" height="24" viewBox="0 0 24 24"><defs><linearGradient id="eg" x1="0" y1="0" x2="1" y2=".4"><stop offset="0" stopColor="#2aa6e8" /><stop offset=".6" stopColor="#2fc6c0" /><stop offset="1" stopColor="#5fd955" /></linearGradient></defs><circle cx="12" cy="12" r="12" fill="#1268c3" /><path d="M.3 9.500A12 12 0 0 1 24 12q-.5 5-6 5q-4.500 0-3.500-2.500Q16.500 10 11 8Q4.500 6 .3 9.500" fill="url(#eg)" /><path d="M9.500 11q-2 6 3 9.500q5 2 9.500-1.500Q19 24 12.500 24Q5 23 6 16q.5-3.500 3.500-5" fill="#0c3f8c" /><path d="M14.500 14.500Q13.500 17 18 17q4 0 6-3q-.5 4-3 5.500q-5 2-8.500-.5T10 12q1-2 3-1.500q3 1 1.500 4" fill="#2e4539" /></svg>
        </TaskButton>
        <TaskButton><VscVscode size={24} color="#2196e3" /></TaskButton>
        <TaskButton on><div className="rounded-full bg-black"><FaSpotify size={24} color="#1ed760" /></div></TaskButton>
        <TaskButton on>
          <svg width="22" height="22" viewBox="0 0 22 22"><defs><linearGradient id="pg" x1="0" y1="0" x2="1" y2="1"><stop offset="0" stopColor="#1565c0" /><stop offset="1" stopColor="#7a5cc0" /></linearGradient></defs><rect width="22" height="22" rx="2" fill="url(#pg)" /><path d="M0 17L9 8.500q1.500-1 3 0L22 19v1q0 2-2 2H2q-2 0-2-2z" fill="#2aaef0" /><path d="M3 22l9-8.500l9 8.500z" fill="#1673cf" /><circle cx="16" cy="4" r="2" fill="#fff" /></svg>
        </TaskButton>
      </div>
      <div className="flex-1" />
      <svg width="12" height="7" fill="none" stroke="#fff" strokeWidth="1.300"><path d="M.7 6.300L6 1l5.300 5.300" /></svg>
      <svg width="66" height="18" className="ml-[9px]" fill="none" stroke="#fff" strokeWidth="1.100">
        <path d="M1.500 4L16.500 1.500v13H1.500zM6 9q1-3 4-3q1.500 0 2.500 1M13 5v2.500h-2.500M12.500 8q-1 3-4 3q-1.500 0-2.500-1M5.500 12V9.800H8" /><circle cx="13.500" cy="13.500" r="3.500" fill="#ff9800" stroke="none" />
        <path d="M30 4.500h11v9H29.500M35 13.500v3M31 16.500h8M25.500 4h5v4h-5zM27.500 8v5.500" />
        <path d="M49.500 6.500h2.500l4-3.500v12l-4-3.500h-2.500z" /><path d="M58 6q1.500 3 0 6" /><path d="M60.500 4.500q2.500 4.500 0 9M63 3q3.500 6 0 12" stroke="#7d8c84" />
      </svg>
      <Fit w={19} className="ml-[11px] text-[12px]">ESP</Fit>
      <div className="ml-3 flex w-[58px] flex-col items-center text-[12px] leading-[18px]"><Fit w={27}>18:10</Fit><Fit w={58}>25/11/2024</Fit></div>
      <svg width="26" height="28" viewBox="0 0 26 28" className="ml-[14px] mt-[3px]"><path d="M1 3h16v11H7.500L4.500 17v-3H1z" fill="#fff" /><path d="M4 6h10M4 8.500h10M4 11h7" stroke="#2e4539" /><circle cx="16.500" cy="18" r="8.500" fill="#19645a" stroke="#8fa39a" /></svg>
      <span className="-ml-[15.500px] mt-[12px] w-3 text-center text-[10px] font-semibold leading-none">13</span>
      <div className="ml-[14px] mr-[5px] h-10 w-px bg-[#6d7f75]" />
    </div>
  );
}

export default function App() {
  return (
    <div className="flex h-[1080px] w-[1920px] flex-col overflow-hidden font-['Liberation_Sans',Arial,sans-serif]">
      <TabStrip />
      <AddressBar />
      <AppHeader />
      <div className="flex h-[903px]">
        <Rail />
        <PagesPanel />
        <Canvas />
        <Settings />
      </div>
      <Taskbar />
    </div>
  );
}
